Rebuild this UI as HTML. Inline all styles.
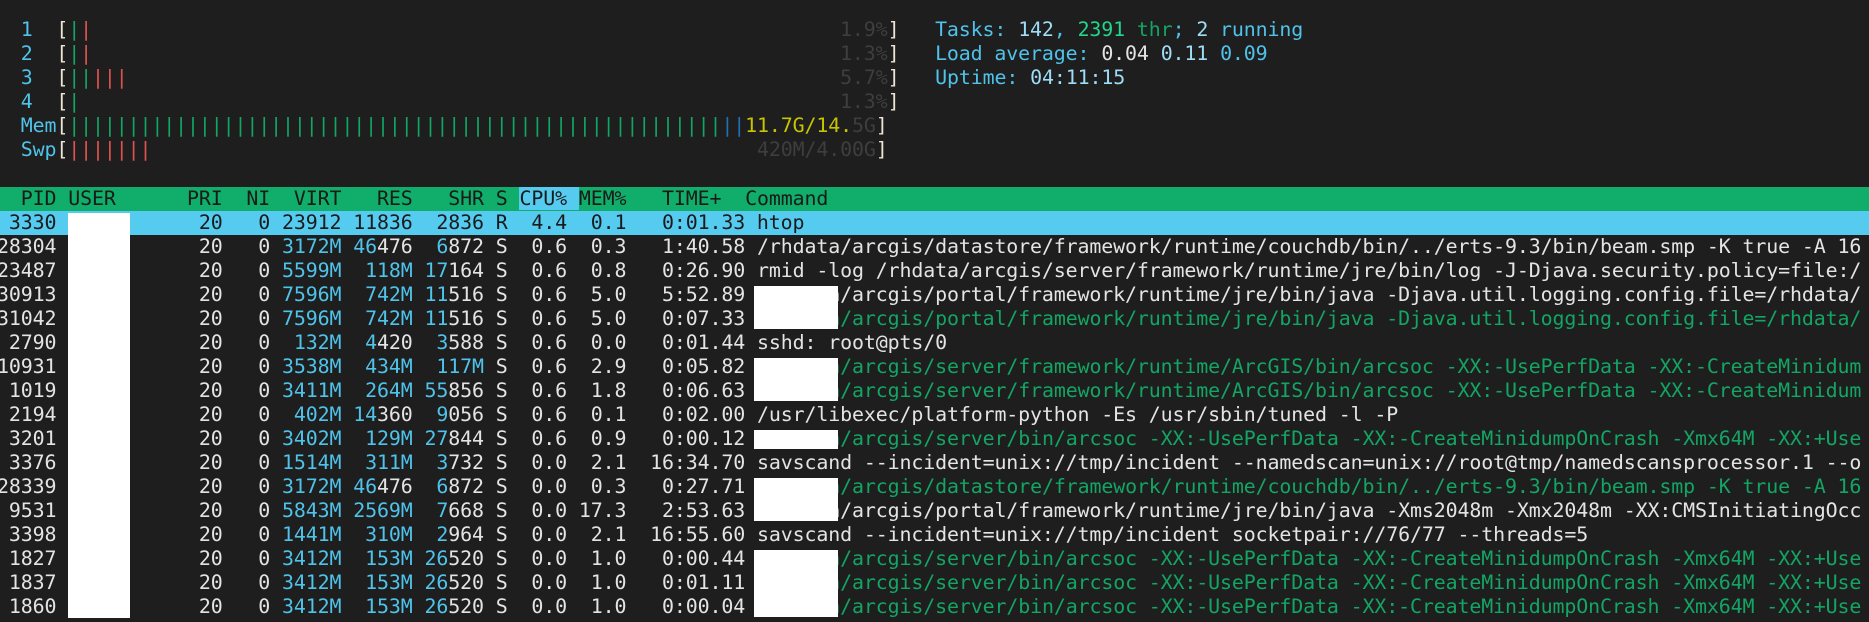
<!DOCTYPE html>
<html><head><meta charset="utf-8"><style>
html,body{margin:0;padding:0;background:#1e1e1e;width:1869px;height:622px;overflow:hidden;position:relative}
.l{position:absolute;left:-3px;height:24px;line-height:24px;white-space:pre;font-family:"DejaVu Sans Mono","Liberation Mono",monospace;font-size:19.93px;letter-spacing:-0.12px;color:#e4e4e4;width:1900px}
.c{color:#4fc3ea}.lc{color:#9fdcf6}.g{color:#13a564}.bg{color:#22d68a}.r{color:#e0524e}.d{color:#3e3e3e}.y{color:#c8c400}.b{color:#1f72b0}.w{color:#e4e4e4}.br{color:#ece4d4}
.hdr{background:#10ae6a;color:#1a1a1a;left:0;width:1869px;padding-left:0}
.sel{background:#55cbf0;color:#1a1a1a;left:0;width:1869px}
.hcpu{background:#55cbf0}
.box{position:absolute;background:#fff}
</style></head><body>
<div class="l" style="top:18px;right:auto">  <span class="c">1</span>  <span class="br">[</span><span class="g">|</span><span class="r">|</span>                                                               <span class="d">1.9%</span><span class="br">]</span>   <span class="c">Tasks: </span><span class="lc">142</span><span class="c">, </span><span class="bg">2391</span><span class="g"> thr</span><span class="c">; </span><span class="lc">2</span><span class="c"> running</span></div>
<div class="l" style="top:42px">  <span class="c">2</span>  <span class="br">[</span><span class="g">|</span><span class="r">|</span>                                                               <span class="d">1.3%</span><span class="br">]</span>   <span class="c">Load average: </span><span class="w">0.04 </span><span class="lc">0.11 </span><span class="c">0.09</span></div>
<div class="l" style="top:66px">  <span class="c">3</span>  <span class="br">[</span><span class="g">||</span><span class="r">|||</span>                                                            <span class="d">5.7%</span><span class="br">]</span>   <span class="c">Uptime: </span><span class="lc">04:11:15</span></div>
<div class="l" style="top:90px">  <span class="c">4</span>  <span class="br">[</span><span class="g">|</span>                                                                <span class="d">1.3%</span><span class="br">]</span></div>
<div class="l" style="top:114px">  <span class="c">Mem</span><span class="br">[</span><span class="g">|||||||||||||||||||||||||||||||||||||||||||||||||||||||</span><span class="b">||</span><span class="y">11.7G/14.</span><span class="d">5G</span><span class="br">]</span></div>
<div class="l" style="top:138px">  <span class="c">Swp</span><span class="br">[</span><span class="r">|||||||</span>                                                   <span class="d">420M/4.00G</span><span class="br">]</span></div>

<div class="l hdr" style="top:187px;left:0"><span style="margin-left:-3px">  PID USER      PRI  NI  VIRT   RES   SHR S <span class="hcpu">CPU% </span>MEM%   TIME+  Command</span></div>
<div class="l sel" style="top:211px;left:0"><span style="margin-left:-3px"> 3330            20   0 23912 11836  2836 R  4.4  0.1   0:01.33 htop</span></div>
<div class="l" style="top:235px">28304            20   0 <span class="c">3172M</span> <span class="c">46</span>476  <span class="c">6</span>872 S  0.6  0.3   1:40.58 /rhdata/arcgis/datastore/framework/runtime/couchdb/bin/../erts-9.3/bin/beam.smp -K true -A 16</div>
<div class="l" style="top:259px">23487            20   0 <span class="c">5599M</span>  <span class="c">118M</span> <span class="c">17</span>164 S  0.6  0.8   0:26.90 rmid -log /rhdata/arcgis/server/framework/runtime/jre/bin/log -J-Djava.security.policy=file:/</div>
<div class="l" style="top:283px">30913            20   0 <span class="c">7596M</span>  <span class="c">742M</span> <span class="c">11</span>516 S  0.6  5.0   5:52.89 /rhdata/arcgis/portal/framework/runtime/jre/bin/java -Djava.util.logging.config.file=/rhdata/</div>
<div class="l" style="top:307px">31042            20   0 <span class="c">7596M</span>  <span class="c">742M</span> <span class="c">11</span>516 S  0.6  5.0   0:07.33 <span class="g">/rhdata/arcgis/portal/framework/runtime/jre/bin/java -Djava.util.logging.config.file=/rhdata/</span></div>
<div class="l" style="top:331px"> 2790            20   0  <span class="c">132M</span>  <span class="c">4</span>420  <span class="c">3</span>588 S  0.6  0.0   0:01.44 sshd: root@pts/0</div>
<div class="l" style="top:355px">10931            20   0 <span class="c">3538M</span>  <span class="c">434M</span>  <span class="c">117M</span> S  0.6  2.9   0:05.82 <span class="g">/rhdata/arcgis/server/framework/runtime/ArcGIS/bin/arcsoc -XX:-UsePerfData -XX:-CreateMinidum</span></div>
<div class="l" style="top:379px"> 1019            20   0 <span class="c">3411M</span>  <span class="c">264M</span> <span class="c">55</span>856 S  0.6  1.8   0:06.63 <span class="g">/rhdata/arcgis/server/framework/runtime/ArcGIS/bin/arcsoc -XX:-UsePerfData -XX:-CreateMinidum</span></div>
<div class="l" style="top:403px"> 2194            20   0  <span class="c">402M</span> <span class="c">14</span>360  <span class="c">9</span>056 S  0.6  0.1   0:02.00 /usr/libexec/platform-python -Es /usr/sbin/tuned -l -P</div>
<div class="l" style="top:427px"> 3201            20   0 <span class="c">3402M</span>  <span class="c">129M</span> <span class="c">27</span>844 S  0.6  0.9   0:00.12 <span class="g">/rhdata/arcgis/server/bin/arcsoc -XX:-UsePerfData -XX:-CreateMinidumpOnCrash -Xmx64M -XX:+Use</span></div>
<div class="l" style="top:451px"> 3376            20   0 <span class="c">1514M</span>  <span class="c">311M</span>  <span class="c">3</span>732 S  0.0  2.1  16:34.70 savscand --incident=unix://tmp/incident --namedscan=unix://root@tmp/namedscansprocessor.1 --o</div>
<div class="l" style="top:475px">28339            20   0 <span class="c">3172M</span> <span class="c">46</span>476  <span class="c">6</span>872 S  0.0  0.3   0:27.71 <span class="g">/rhdata/arcgis/datastore/framework/runtime/couchdb/bin/../erts-9.3/bin/beam.smp -K true -A 16</span></div>
<div class="l" style="top:499px"> 9531            20   0 <span class="c">5843M</span> <span class="c">2569M</span>  <span class="c">7</span>668 S  0.0 17.3   2:53.63 /rhdata/arcgis/portal/framework/runtime/jre/bin/java -Xms2048m -Xmx2048m -XX:CMSInitiatingOcc</div>
<div class="l" style="top:523px"> 3398            20   0 <span class="c">1441M</span>  <span class="c">310M</span>  <span class="c">2</span>964 S  0.0  2.1  16:55.60 savscand --incident=unix://tmp/incident socketpair://76/77 --threads=5</div>
<div class="l" style="top:547px"> 1827            20   0 <span class="c">3412M</span>  <span class="c">153M</span> <span class="c">26</span>520 S  0.0  1.0   0:00.44 <span class="g">/rhdata/arcgis/server/bin/arcsoc -XX:-UsePerfData -XX:-CreateMinidumpOnCrash -Xmx64M -XX:+Use</span></div>
<div class="l" style="top:571px"> 1837            20   0 <span class="c">3412M</span>  <span class="c">153M</span> <span class="c">26</span>520 S  0.0  1.0   0:01.11 <span class="g">/rhdata/arcgis/server/bin/arcsoc -XX:-UsePerfData -XX:-CreateMinidumpOnCrash -Xmx64M -XX:+Use</span></div>
<div class="l" style="top:595px"> 1860            20   0 <span class="c">3412M</span>  <span class="c">153M</span> <span class="c">26</span>520 S  0.0  1.0   0:00.04 <span class="g">/rhdata/arcgis/server/bin/arcsoc -XX:-UsePerfData -XX:-CreateMinidumpOnCrash -Xmx64M -XX:+Use</span></div>

<div class="box" style="left:68px;top:213px;width:62px;height:405px"></div>
<div class="box" style="left:754px;top:286px;width:84px;height:43px"></div>
<div class="box" style="left:754px;top:358px;width:84px;height:43px"></div>
<div class="box" style="left:754px;top:430px;width:84px;height:19px"></div>
<div class="box" style="left:754px;top:478px;width:84px;height:43px"></div>
<div class="box" style="left:754px;top:550px;width:84px;height:67px"></div>
</body></html>
